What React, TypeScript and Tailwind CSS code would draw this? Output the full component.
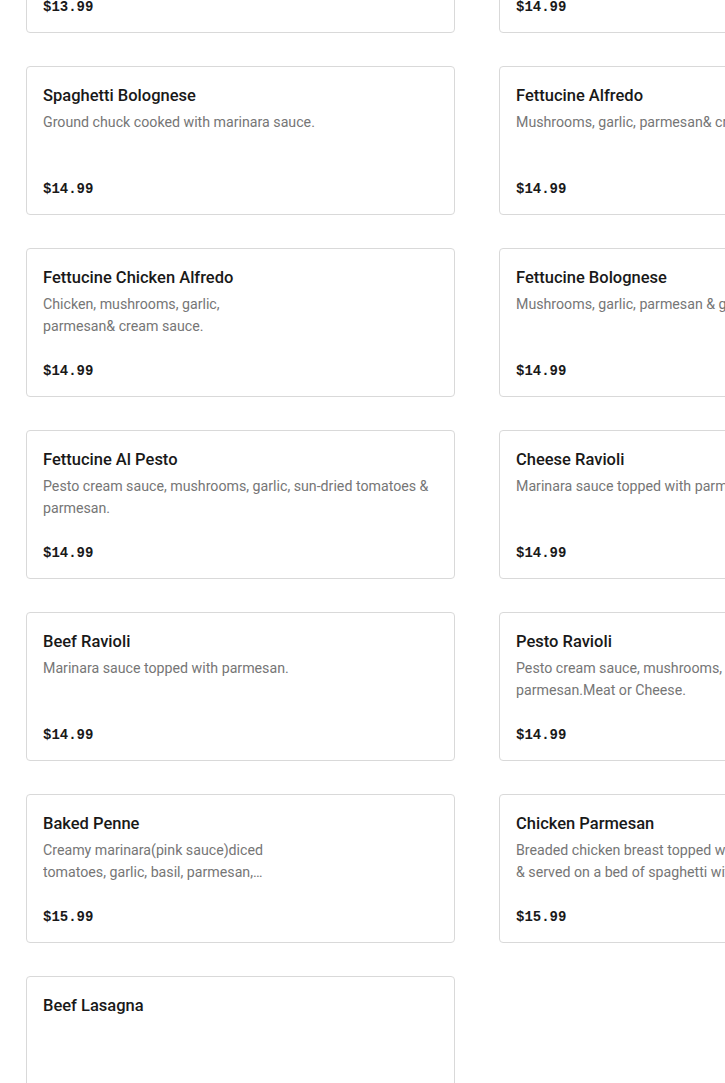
import React from 'react';

type Item = {
  name: string;
  desc?: React.ReactNode;
  price: string;
  narrow?: boolean;
};

const items: Item[] = [
  { name: 'Chicken Alfredo', desc: 'Chicken, garlic, parmesan & cream sauce.', price: '$13.99' },
  { name: 'Spaghetti Al Pesto', desc: 'Pesto cream sauce, garlic & parmesan.', price: '$14.99' },
  { name: 'Spaghetti Bolognese', desc: 'Ground chuck cooked with marinara sauce.', price: '$14.99' },
  { name: 'Fettucine Alfredo', desc: 'Mushrooms, garlic, parmesan& cream sauce.', price: '$14.99' },
  { name: 'Fettucine Chicken Alfredo', desc: 'Chicken, mushrooms, garlic, parmesan& cream sauce.', price: '$14.99', narrow: true },
  { name: 'Fettucine Bolognese', desc: 'Mushrooms, garlic, parmesan & ground chuck.', price: '$14.99' },
  { name: 'Fettucine Al Pesto', desc: 'Pesto cream sauce, mushrooms, garlic, sun-dried tomatoes & parmesan.', price: '$14.99' },
  { name: 'Cheese Ravioli', desc: 'Marinara sauce topped with parmesan.', price: '$14.99' },
  { name: 'Beef Ravioli', desc: 'Marinara sauce topped with parmesan.', price: '$14.99' },
  { name: 'Pesto Ravioli', desc: 'Pesto cream sauce, mushrooms, garlic, sun-dried tomatoes & parmesan.Meat or Cheese.', price: '$14.99' },
  { name: 'Baked Penne', desc: 'Creamy marinara(pink sauce)diced tomatoes, garlic, basil, parmesan, mozzarella & ricotta.', price: '$15.99', narrow: true },
  {
    name: 'Chicken Parmesan',
    desc: (
      <>
        Breaded chicken breast topped with marinara sauce
        <br />& served on a bed of spaghetti with marinara.
      </>
    ),
    price: '$15.99',
  },
  { name: 'Beef Lasagna', price: '$15.99', narrow: true },
];

function MenuCard({ item }: { item: Item }) {
  return (
    <div className="flex h-[149px] flex-col rounded-[4px] border border-[#d9d9d9] bg-white px-4 pt-[17px] pb-[15px]">
      <div className="text-[16.5px] leading-6 font-medium text-[#191919]">{item.name}</div>
      <div
        className={
          'mt-[3px] line-clamp-2 text-[14.2px] leading-[22px] text-[#767676] ' +
          (item.narrow ? 'max-w-[228px]' : '')
        }
      >
        {item.desc}
      </div>
      <div
        className="mt-auto text-[14px] leading-5 font-bold text-[#191919]"
        style={{ fontFamily: '"Liberation Mono", "DejaVu Sans Mono", monospace' }}
      >
        {item.price}
      </div>
    </div>
  );
}

export default function App() {
  return (
    <div
      className="h-[1083px] w-full overflow-hidden bg-white"
      style={{ fontFamily: 'Roboto, "Liberation Sans", Arial, sans-serif' }}
    >
      <div className="-mt-[116px] grid w-[928px] grid-cols-[429px_429px] gap-x-[44px] gap-y-[33px] pl-[26px]">
        {items.map((item, i) => (
          <MenuCard key={i} item={item} />
        ))}
      </div>
    </div>
  );
}
